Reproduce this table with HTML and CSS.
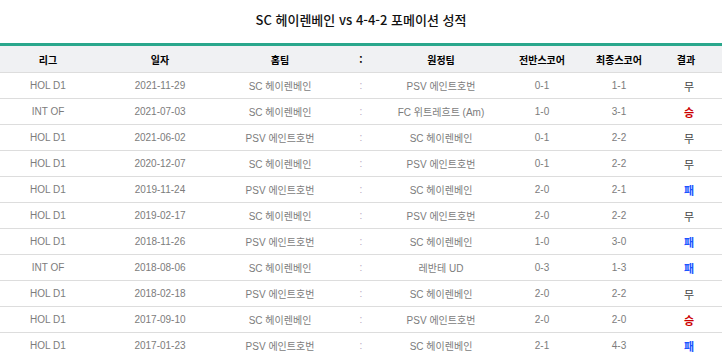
FILE: index.html
```html
<!DOCTYPE html>
<html lang="ko">
<head>
<meta charset="utf-8">
<link rel="stylesheet" href="styles.css">
</head>
<body>
<div class="page">
  <h1 class="title">SC 헤이렌베인 vs 4-4-2 포메이션 성적</h1>
  <div class="table">
    <div class="row head">
      <div>리그</div><div>일자</div><div>홈팀</div><div>:</div><div>원정팀</div><div>전반스코어</div><div>최종스코어</div><div>결과</div>
    </div>
    <div class="row"><div>HOL D1</div><div>2021-11-29</div><div>SC 헤이렌베인</div><div class="colon">:</div><div>PSV 에인트호번</div><div>0-1</div><div>1-1</div><div class="res draw">무</div></div>
    <div class="row"><div>INT OF</div><div>2021-07-03</div><div>SC 헤이렌베인</div><div class="colon">:</div><div>FC 위트레흐트 (Am)</div><div>1-0</div><div>3-1</div><div class="res win">승</div></div>
    <div class="row"><div>HOL D1</div><div>2021-06-02</div><div>PSV 에인트호번</div><div class="colon">:</div><div>SC 헤이렌베인</div><div>0-1</div><div>2-2</div><div class="res draw">무</div></div>
    <div class="row"><div>HOL D1</div><div>2020-12-07</div><div>SC 헤이렌베인</div><div class="colon">:</div><div>PSV 에인트호번</div><div>0-1</div><div>2-2</div><div class="res draw">무</div></div>
    <div class="row"><div>HOL D1</div><div>2019-11-24</div><div>PSV 에인트호번</div><div class="colon">:</div><div>SC 헤이렌베인</div><div>2-0</div><div>2-1</div><div class="res loss">패</div></div>
    <div class="row"><div>HOL D1</div><div>2019-02-17</div><div>SC 헤이렌베인</div><div class="colon">:</div><div>PSV 에인트호번</div><div>2-0</div><div>2-2</div><div class="res draw">무</div></div>
    <div class="row"><div>HOL D1</div><div>2018-11-26</div><div>PSV 에인트호번</div><div class="colon">:</div><div>SC 헤이렌베인</div><div>1-0</div><div>3-0</div><div class="res loss">패</div></div>
    <div class="row"><div>INT OF</div><div>2018-08-06</div><div>SC 헤이렌베인</div><div class="colon">:</div><div>레반테 UD</div><div>0-3</div><div>1-3</div><div class="res loss">패</div></div>
    <div class="row"><div>HOL D1</div><div>2018-02-18</div><div>PSV 에인트호번</div><div class="colon">:</div><div>SC 헤이렌베인</div><div>2-0</div><div>2-2</div><div class="res draw">무</div></div>
    <div class="row"><div>HOL D1</div><div>2017-09-10</div><div>SC 헤이렌베인</div><div class="colon">:</div><div>PSV 에인트호번</div><div>2-0</div><div>2-0</div><div class="res win">승</div></div>
    <div class="row"><div>HOL D1</div><div>2017-01-23</div><div>PSV 에인트호번</div><div class="colon">:</div><div>SC 헤이렌베인</div><div>2-1</div><div>4-3</div><div class="res loss">패</div></div>
  </div>
</div>
</body>
</html>
```
FILE: styles.css
```css
html, body {
  margin: 0;
  padding: 0;
  background: #ffffff;
}
.page {
  width: 722px;
  font-family: "Liberation Sans", "Noto Sans CJK KR", sans-serif;
}
.title {
  margin: 0;
  height: 43px;
  line-height: 40px;
  text-align: center;
  font-family: "Noto Sans CJK KR", "Liberation Sans", sans-serif;
  font-size: 13px;
  font-weight: 500;
  color: #111;
}
.table {
  border-top: 3px solid #2aa78c;
}
.row {
  display: grid;
  grid-template-columns: 96px 128px 112px 50px 110px 92px 62px 72px;
  height: 25px;
  align-items: center;
  text-align: center;
  border-bottom: 1px solid #dddddd;
  font-size: 10px;
  color: #7c7c7c;
}
.row > div {
  white-space: nowrap;
}
.row.head {
  height: 26px;
  background: #f0f1f3;
  font-family: "Noto Sans CJK KR", sans-serif;
  font-weight: bold;
  font-size: 10px;
  color: #000;
}
.colon {
  color: #b8a6c0;
}
.res {
  font-family: "Noto Sans CJK KR", sans-serif;
  font-size: 11px;
  padding-left: 6px;
}
.draw { color: #444; }
.win { color: #cc0000; font-weight: bold; }
.loss { color: #1a55ff; font-weight: bold; }
```
